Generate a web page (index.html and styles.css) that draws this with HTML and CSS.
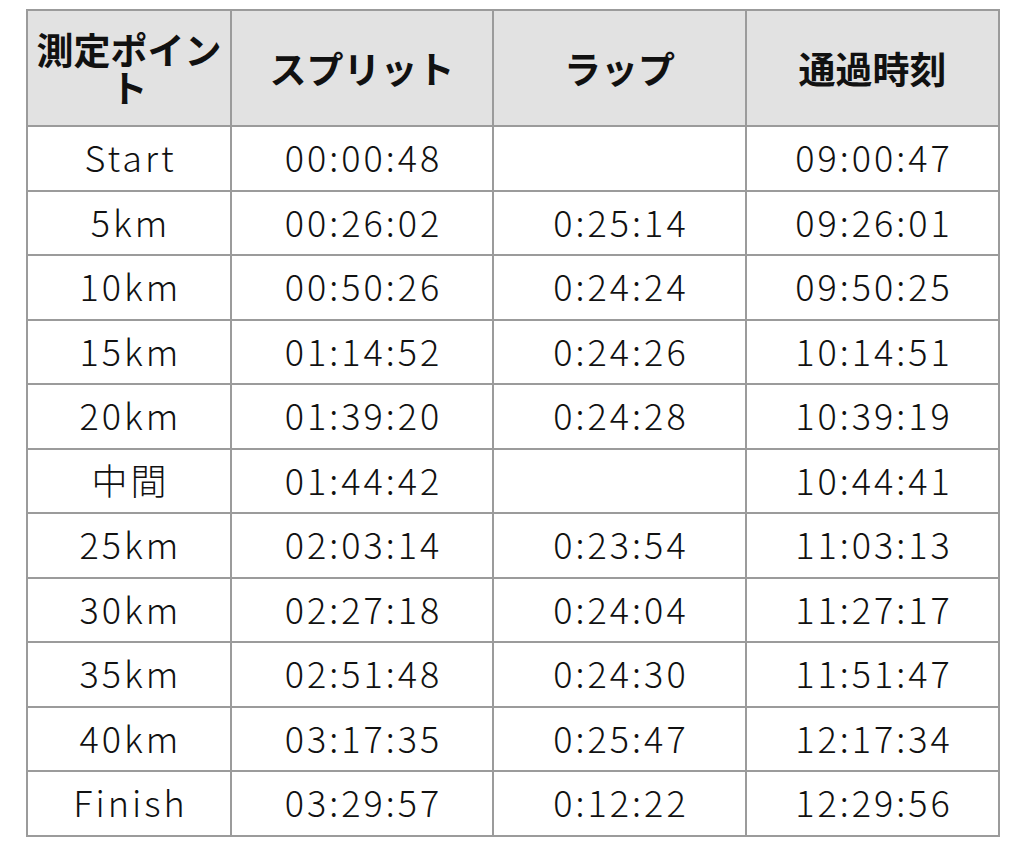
FILE: index.html
```html
<!DOCTYPE html>
<html lang="ja">
<head>
<meta charset="utf-8">
<link rel="stylesheet" href="styles.css">
</head>
<body>
<table class="splits">
<colgroup>
<col class="c1"><col class="c2"><col class="c3"><col class="c4">
</colgroup>
<thead>
<tr><th>測定ポイント</th><th>スプリット</th><th>ラップ</th><th>通過時刻</th></tr>
</thead>
<tbody>
<tr><td>Start</td><td>00:00:48</td><td></td><td>09:00:47</td></tr>
<tr><td>5km</td><td>00:26:02</td><td>0:25:14</td><td>09:26:01</td></tr>
<tr><td>10km</td><td>00:50:26</td><td>0:24:24</td><td>09:50:25</td></tr>
<tr><td>15km</td><td>01:14:52</td><td>0:24:26</td><td>10:14:51</td></tr>
<tr><td>20km</td><td>01:39:20</td><td>0:24:28</td><td>10:39:19</td></tr>
<tr><td>中間</td><td>01:44:42</td><td></td><td>10:44:41</td></tr>
<tr><td>25km</td><td>02:03:14</td><td>0:23:54</td><td>11:03:13</td></tr>
<tr><td>30km</td><td>02:27:18</td><td>0:24:04</td><td>11:27:17</td></tr>
<tr><td>35km</td><td>02:51:48</td><td>0:24:30</td><td>11:51:47</td></tr>
<tr><td>40km</td><td>03:17:35</td><td>0:25:47</td><td>12:17:34</td></tr>
<tr><td>Finish</td><td>03:29:57</td><td>0:12:22</td><td>12:29:56</td></tr>
</tbody>
</table>
</body>
</html>
```
FILE: styles.css
```css
html, body {
  margin: 0;
  padding: 0;
  background: #ffffff;
}
body {
  padding: 9px 0 0 26px;
  font-family: "Noto Sans CJK JP", "Noto Sans", sans-serif;
  color: #111111;
}
.splits {
  border-collapse: collapse;
  table-layout: fixed;
  width: 972px;
}
.c1 { width: 204px; }
.c2 { width: 262px; }
.c3 { width: 253px; }
.c4 { width: 253px; }
.splits th,
.splits td {
  border: 2px solid #9b9b9b;
  text-align: center;
  vertical-align: middle;
}
.splits th {
  background: #e2e2e2;
  font-weight: 700;
  font-size: 37px;
  line-height: 38px;
  height: 114px;
  padding: 0 8px;
}
.splits td {
  font-size: 36px;
  font-weight: 300;
  letter-spacing: 3px;
  height: 58.5px;
  line-height: 40px;
  padding: 0 0 4px 3px;
}
```
